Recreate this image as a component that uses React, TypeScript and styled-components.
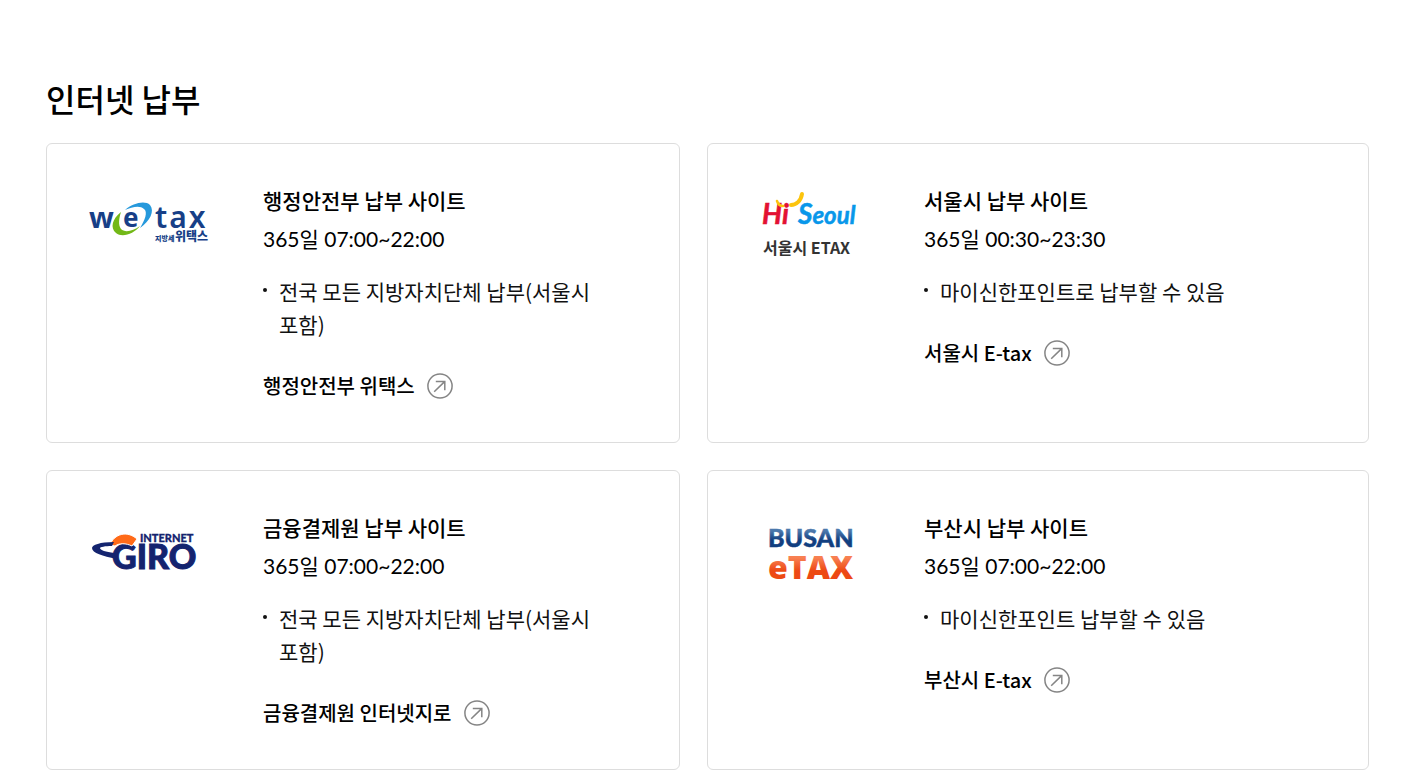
import React from "react";
import styled, { createGlobalStyle } from "styled-components";

const GlobalStyle = createGlobalStyle`
  *, *::before, *::after { box-sizing: border-box; }
  body {
    margin: 0;
    background: #fff;
    color: #000;
    font-family: "Noto Sans CJK KR", sans-serif;
    font-size: 21px;
    line-height: 33px;
    word-break: keep-all;
  }
`;

const Page = styled.main`
  padding: 74px 40px 8px 46px;
`;

const Heading = styled.h2`
  margin: 0 0 21px;
  font-size: 32px;
  line-height: 48px;
  font-weight: 500;
`;

const Cards = styled.ul`
  display: grid;
  grid-template-columns: 634fr 662fr;
  gap: 27px;
  margin: 0;
  padding: 0;
  list-style: none;
`;

const Card = styled.li`
  display: grid;
  grid-template-columns: 136px 1fr;
  column-gap: 40px;
  align-items: start;
  padding: 40px;
  border: 1px solid #ddd;
  border-radius: 6px;
`;

const Logo = styled.svg`
  display: block;
  width: 136px;
  height: 80px;
`;

const SiteName = styled.h3`
  margin: 0 0 5px;
  font-size: 21px;
  line-height: 33px;
  font-weight: 500;
`;

const Hours = styled.p`
  margin: 0 0 20px;
  font-family: Lato, "Noto Sans CJK KR", sans-serif;
`;

const Notes = styled.ul`
  margin: 0 0 28px;
  padding: 0;
  list-style: none;
`;

const Note = styled.li`
  position: relative;
  padding-left: 16px;
  color: #111;

  &::before {
    content: "";
    position: absolute;
    left: 0;
    top: 13px;
    width: 4px;
    height: 4px;
    border-radius: 50%;
    background: #111;
  }
`;

const SiteLink = styled.a`
  display: inline-flex;
  align-items: center;
  gap: 12px;
  color: inherit;
  font-size: 20px;
  font-weight: 500;
  text-decoration: none;
  vertical-align: top;
`;

const ArrowIcon = () => (
  <svg width="26" height="26" viewBox="0 0 26 26" fill="none" stroke="#858585" strokeWidth="1.5" aria-hidden="true">
    <circle cx="13" cy="13" r="12.1" />
    <path d="M7.2 18.8 17.6 8.6M8.8 8.4h9v8.8" />
  </svg>
);

const WetaxLogo = () => (
  <Logo viewBox="0 0 136 80" role="img" aria-label="wetax 위택스">
    <g fill="#173f87" fontFamily="Noto Sans, sans-serif" fontWeight="700" fontSize="29">
      <text x="2" y="44">w</text>
      <text x="36" y="43" fontSize="26">e</text>
      <text x="68" y="44" fontSize="30" fontWeight="600" letterSpacing="2">tax</text>
    </g>
    <path d="M34 28C25 35 23 44 29 49c6 5 18 1 24-7-7 5-15 7-19 3-3-4-2-11 0-17z" fill="#72b817" />
    <path d="M38 26c8-7 20-10 25-5 5 6 0 16-10 23 5-8 8-16 4-19-4-4-12-2-19 1z" fill="#2699dc" />
    <g fill="#173f87" fontFamily="Noto Sans CJK KR, sans-serif" fontWeight="900">
      <text x="68" y="57" fontSize="7">지방세</text>
      <text x="88" y="57" fontSize="12">위택스</text>
    </g>
  </Logo>
);

const SeoulLogo = () => (
  <Logo viewBox="0 0 136 80" role="img" aria-label="Hi Seoul 서울시 ETAX">
    <g fontFamily="Lato, sans-serif" fontWeight="700" fontStyle="italic" strokeWidth="0.5">
      <text x="14" y="40" fill="#e31132" stroke="#e31132" fontSize="28">Hi</text>
      <text x="50" y="40" fill="#0897ea" stroke="#0897ea" fontSize="24"><tspan fontSize="28">S</tspan>eoul</text>
    </g>
    <path d="M29 17c1 3 3 5 6 5" fill="none" stroke="#fcc40d" strokeWidth="2.5" strokeLinecap="round" />
    <path d="M43 21c5 0 10-4 11-11" fill="none" stroke="#fcc40d" strokeWidth="4" strokeLinecap="round" />
    <text x="15" y="70" fill="#333" fontFamily="Noto Sans CJK KR, sans-serif" fontWeight="700" fontSize="16">서울시 ETAX</text>
  </Logo>
);

const GiroLogo = () => (
  <Logo viewBox="0 0 136 80" role="img" aria-label="INTERNET GIRO">
    <g fill="#14246f" stroke="#14246f" fontFamily="Lato, sans-serif" fontWeight="900">
      <text x="53" y="31" fontSize="11" strokeWidth="0.3">INTERNET</text>
      <text x="25" y="58" fontSize="34" strokeWidth="1">GIRO</text>
    </g>
    <path d="M23 34c4-11 17-15 27-6l-5 7c-6-3-13-3-17 0z" fill="#ff6a18" stroke="#fff" strokeWidth="1" />
    <path d="M27 31C13 31 5 34 5 37c0 5 11 8 24 11l-2-6c-8-1-14-3-14-5 0-1 5-2 12-2z" fill="#14246f" />
  </Logo>
);

const BusanLogo = () => (
  <Logo viewBox="0 0 136 80" role="img" aria-label="BUSAN eTAX">
    <defs>
      <linearGradient id="busan-blue" x1="0" y1="0" x2="0" y2="1">
        <stop offset="0.3" stopColor="#4b78ac" />
        <stop offset="0.6" stopColor="#123f80" />
      </linearGradient>
      <linearGradient id="busan-orange" x1="0" y1="0" x2="0" y2="1">
        <stop offset="0.3" stopColor="#f88052" />
        <stop offset="0.6" stopColor="#ed4914" />
      </linearGradient>
    </defs>
    <text x="20" y="36" fill="url(#busan-blue)" stroke="url(#busan-blue)" strokeWidth="0.5" fontFamily="Lato, sans-serif" fontWeight="900" fontSize="25">BUSAN</text>
    <text x="20" y="68" fill="url(#busan-orange)" fontFamily="Open Sans, sans-serif" fontWeight="800" fontSize="32">eTAX</text>
  </Logo>
);

interface Site {
  name: string;
  hours: string;
  note: string;
  link: string;
  logo: React.ReactNode;
}

const sites: Site[] = [
  { name: "행정안전부 납부 사이트", hours: "365일 07:00~22:00", note: "전국 모든 지방자치단체 납부(서울시 포함)", link: "행정안전부 위택스", logo: <WetaxLogo /> },
  { name: "서울시 납부 사이트", hours: "365일 00:30~23:30", note: "마이신한포인트로 납부할 수 있음", link: "서울시 E-tax", logo: <SeoulLogo /> },
  { name: "금융결제원 납부 사이트", hours: "365일 07:00~22:00", note: "전국 모든 지방자치단체 납부(서울시 포함)", link: "금융결제원 인터넷지로", logo: <GiroLogo /> },
  { name: "부산시 납부 사이트", hours: "365일 07:00~22:00", note: "마이신한포인트 납부할 수 있음", link: "부산시 E-tax", logo: <BusanLogo /> },
];

export default function App() {
  return (
    <>
      <GlobalStyle />
      <Page>
        <Heading>인터넷 납부</Heading>
        <Cards>
          {sites.map((site) => (
            <Card key={site.name}>
              {site.logo}
              <div>
                <SiteName>{site.name}</SiteName>
                <Hours>{site.hours}</Hours>
                <Notes>
                  <Note>{site.note}</Note>
                </Notes>
                <SiteLink href="#">
                  {site.link}
                  <ArrowIcon />
                </SiteLink>
              </div>
            </Card>
          ))}
        </Cards>
      </Page>
    </>
  );
}
